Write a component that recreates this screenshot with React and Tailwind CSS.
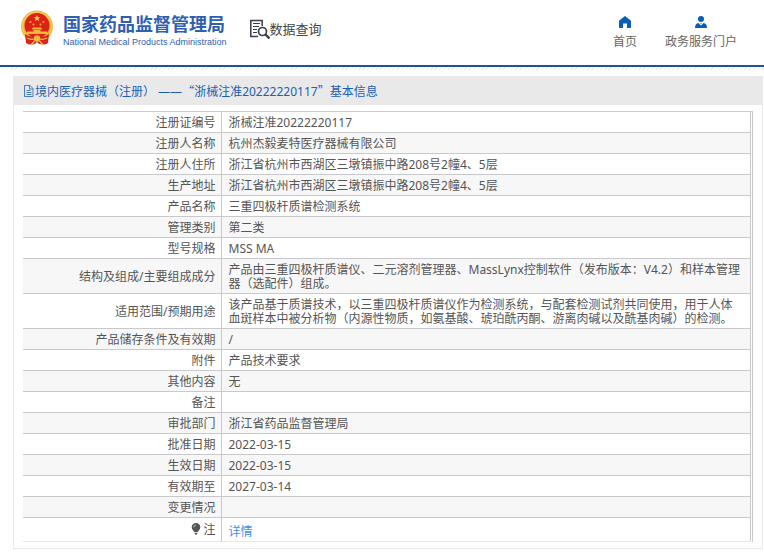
import React from 'react';

const records = [
  { label: '注册证编号', value: '浙械注准20222220117' },
  { label: '注册人名称', value: '杭州杰毅麦特医疗器械有限公司' },
  { label: '注册人住所', value: '浙江省杭州市西湖区三墩镇振中路208号2幢4、5层' },
  { label: '生产地址', value: '浙江省杭州市西湖区三墩镇振中路208号2幢4、5层' },
  { label: '产品名称', value: '三重四极杆质谱检测系统' },
  { label: '管理类别', value: '第二类' },
  { label: '型号规格', value: 'MSS MA' },
  {
    label: '结构及组成/主要组成成分',
    value: '产品由三重四极杆质谱仪、二元溶剂管理器、MassLynx控制软件（发布版本：V4.2）和样本管理器（选配件）组成。',
  },
  {
    label: '适用范围/预期用途',
    value: '该产品基于质谱技术，以三重四极杆质谱仪作为检测系统，与配套检测试剂共同使用，用于人体血斑样本中被分析物（内源性物质，如氨基酸、琥珀酰丙酮、游离肉碱以及酰基肉碱）的检测。',
  },
  { label: '产品储存条件及有效期', value: '/' },
  { label: '附件', value: '产品技术要求' },
  { label: '其他内容', value: '无' },
  { label: '备注', value: '' },
  { label: '审批部门', value: '浙江省药品监督管理局' },
  { label: '批准日期', value: '2022-03-15' },
  { label: '生效日期', value: '2022-03-15' },
  { label: '有效期至', value: '2027-03-14' },
  { label: '变更情况', value: '' },
];

const Emblem = () => (
  <svg className="w-8 h-9 shrink-0" viewBox="0 0 32 36" aria-hidden="true">
    <circle cx="16" cy="16.5" r="16" fill="#eeb93c" />
    <circle cx="16" cy="16.5" r="14.6" fill="none" stroke="#f6cf66" strokeWidth="1" />
    <circle cx="16" cy="15.5" r="12.5" fill="#dc2117" />
    <path d="m16 5 .9 2.3h2.5l-2 1.5.8 2.4-2.2-1.5-2.2 1.5.8-2.4-2-1.5h2.5z" fill="#f9d34b" />
    <g fill="#f3b53c">
      <circle cx="9.5" cy="12" r="1" />
      <circle cx="12.5" cy="14.4" r="1" />
      <circle cx="19.5" cy="14.4" r="1" />
      <circle cx="22.5" cy="12" r="1" />
      <path d="M12 17.5h8l1.500 2h-11zM12.500 20h7v1.500h6.500v2.500H6v-2.500h6.500z" />
    </g>
    <path d="M4 24q4 3 8 2.500 4-2 8 0 4 .5 8-2.500l-1 9q-3 2-6 1.500l-5-1-5 1q-3 .5-6-1.500z" fill="#d9251c" />
    <circle cx="16" cy="28.500" r="3.200" fill="#eeb93c" />
    <path d="M6 28q4 2 7 1M26 28q-4 2-7 1M13.500 31 10 35M18.500 31l3.500 4" stroke="#f1c04a" strokeWidth="1.3" fill="none" />
    <path d="M12.500 35.500 16 32l3.500 3.500z" fill="#fff" />
  </svg>
);

const SearchDocIcon = () => (
  <svg className="w-5 h-5 shrink-0" viewBox="0 0 20 20" fill="none" stroke="#3a3d4a" aria-hidden="true">
    <path d="M8 17.500H.8V1.500h11.400V7" strokeWidth="1.500" />
    <path d="M3 4.500h7M3 7.500h6M3 10.500h4M3 13.500h4" strokeWidth="1" />
    <circle cx="12.500" cy="12.500" r="4" strokeWidth="1.700" />
    <path d="m15.500 15.500 4 4" strokeWidth="2.400" />
  </svg>
);

const HomeIcon = () => (
  <svg className="w-3 h-3" viewBox="0 0 12 12" fill="#0a5cb8" aria-hidden="true">
    <path d="M6 0 0 4.800V11q0 1 1 1H4V7.500h4V12h3q1 0 1-1V4.800z" />
  </svg>
);

const PortalIcon = () => (
  <svg className="w-3 h-3" viewBox="0 0 12 12" fill="#0a5cb8" aria-hidden="true">
    <circle cx="6" cy="3" r="3" />
    <path d="M0 12q0-4.500 3.500-5L6 9.500 8.500 7Q12 7.500 12 12z" />
    <path d="M5.300 7h1.400L6 8.500z" />
  </svg>
);

const FileIcon = () => (
  <svg className="w-3 h-3 shrink-0" viewBox="0 0 12 12" fill="none" stroke="#1b5fb5" strokeWidth=".8" aria-hidden="true">
    <path d="M1.500.5h5.500l3 3v8H1.500zM6.500.5V4H10M3.500 5.500h4M3.500 7.500h5M3.500 9.500h5" />
  </svg>
);

const BulbIcon = () => (
  <svg className="w-3 h-3 inline-block align-[-1px]" viewBox="0 0 12 12" aria-hidden="true">
    <path d="M5 0a4.300 4.300 0 0 0-4.300 4.400C.7 6.700 3 7.500 3 9h4c0-1.500 2.300-2.300 2.300-4.600A4.300 4.300 0 0 0 5 0M3.500 9.800h3L6 11.500H4z" fill="#555" />
    <path d="M2.700 4.300Q3 2.300 5 2" stroke="#ddd" fill="none" strokeWidth=".8" />
  </svg>
);

const Header = () => (
  <header>
    <div className="h-[65px] flex justify-between pl-[21px] pr-[27px] border-b-2 border-[#245490] box-content">
      <div className="flex items-start">
        <a href="#home" className="flex pt-[10px] gap-[10px] text-[#2f5fb0]">
          <Emblem />
          <span className="flex flex-col pt-[2px]">
            <span className="text-[18px] leading-6 font-bold">国家药品监督管理局</span>
            <span className="font-['Liberation_Sans'] text-[9px] leading-3">National Medical Products Administration</span>
          </span>
        </a>
        <h1 className="flex items-center pt-[19px] pl-[23px] text-[13px] leading-5 text-[#444]">
          <SearchDocIcon />
          数据查询
        </h1>
      </div>
      <nav className="flex gap-7 pt-4 text-[#666]">
        <a href="#home" className="flex flex-col items-center gap-1">
          <HomeIcon />
          <span className="leading-5">首页</span>
        </a>
        <a href="#portal" className="flex flex-col items-center gap-1">
          <PortalIcon />
          <span className="leading-5">政务服务门户</span>
        </a>
      </nav>
    </div>
    <div className="h-[3px] bg-[repeating-linear-gradient(135deg,#ececf0_0_1px,#fff_1px_3px)]" />
  </header>
);

const App = () => (
  <div className="bg-white text-xs text-[#555] font-['Noto_Sans','Noto_Sans_CJK_SC',sans-serif]">
    <Header />
    <main className="mt-[6px] ml-[13px] mr-px border border-[#e9e9e9]">
      <h2 className="h-7 flex items-center pl-[9px] bg-[#e9e9e9] text-[#1b5fb5]">
        <FileIcon />
        <span>
          境内医疗器械（注册） ——
          <span className="font-['Noto_Sans_CJK_SC',sans-serif]">“</span>
          浙械注准20222220117
          <span className="font-['Noto_Sans_CJK_SC',sans-serif]">”</span>
          基本信息
        </span>
      </h2>
      <div className="mt-[6px] mb-[6px] ml-[9px] mr-[9px] pr-px border-t border-r border-[#c9c9cd]">
        <table className="w-full border-collapse border-r border-[#c9c9cd]">
          <tbody>
            {records.map(({ label, value }) => (
              <tr key={label} className="border-b border-[#c9c9cd] even:bg-[#f7f7f7]">
                <th scope="row" className="w-[198px] pt-1 pb-[2px] pr-[5px] border-r border-[#c9c9cd] text-right font-normal leading-[14px]">
                  {label}
                </th>
                <td className="pt-1 pb-[2px] pl-[7px] pr-2 leading-[14px]">{value}</td>
              </tr>
            ))}
            <tr className="border-b border-[#e9e9e9]">
              <th scope="row" className="h-6 pr-[5px] border-r border-[#c9c9cd] text-right font-normal">
                <BulbIcon />注
              </th>
              <td className="pt-1 pl-[7px]">
                <a href="#detail" className="text-[#3d8fe0]">详情</a>
              </td>
            </tr>
          </tbody>
        </table>
      </div>
    </main>
  </div>
);

export default App;
